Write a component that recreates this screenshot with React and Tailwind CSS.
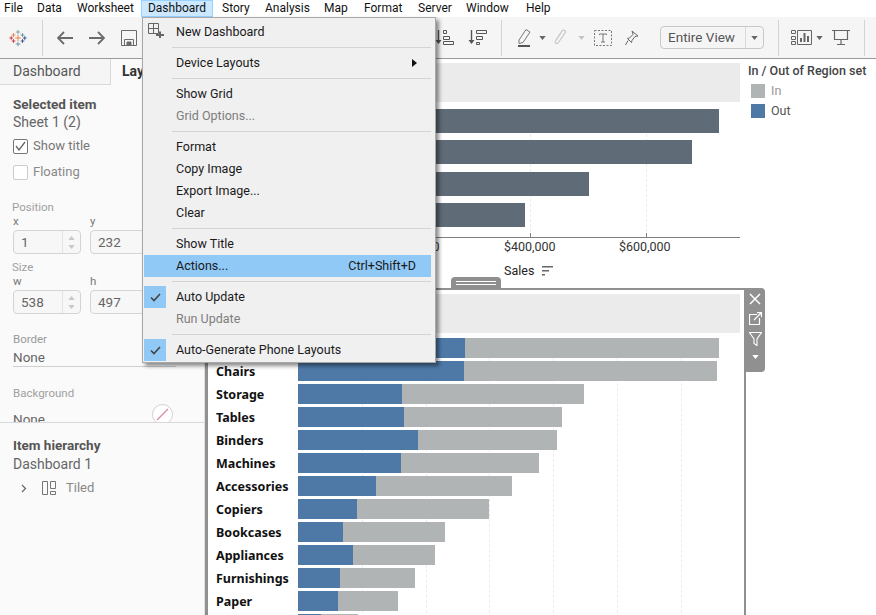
const menuBar = [
  { label: "File", w: "w-[28px]" },
  { label: "Data", w: "w-[40px]" },
  { label: "Worksheet", w: "w-[73px]" },
  { label: "Dashboard", w: "w-[72px]", active: true },
  { label: "Story", w: "w-[43px]" },
  { label: "Analysis", w: "w-[59px]" },
  { label: "Map", w: "w-[40px]" },
  { label: "Format", w: "w-[54px]" },
  { label: "Server", w: "w-[48px]" },
  { label: "Window", w: "w-[60px]" },
  { label: "Help", w: "w-[40px]" },
];

const menuItems = [
  { label: "New Dashboard", icon: true },
  { sep: true },
  { label: "Device Layouts", arrow: true },
  { sep: true },
  { label: "Show Grid" },
  { label: "Grid Options...", disabled: true },
  { sep: true },
  { label: "Format" },
  { label: "Copy Image" },
  { label: "Export Image..." },
  { label: "Clear" },
  { sep: true },
  { label: "Show Title" },
  { label: "Actions...", shortcut: "Ctrl+Shift+D", highlight: true },
  { sep: true },
  { label: "Auto Update", checked: true },
  { label: "Run Update", disabled: true },
  { sep: true },
  { label: "Auto-Generate Phone Layouts", checked: true },
];

const topBars = [
  { y: "mt-[7px]", end: 719 },
  { y: "mt-[7px]", end: 692 },
  { y: "mt-[8px]", end: 589 },
  { y: "mt-[7px]", end: 525 },
];

const rows = [
  { name: "", blue: 465, end: 719 },
  { name: "Chairs", blue: 464, end: 717 },
  { name: "Storage", blue: 402, end: 584 },
  { name: "Tables", blue: 404, end: 562 },
  { name: "Binders", blue: 418, end: 557 },
  { name: "Machines", blue: 401, end: 539 },
  { name: "Accessories", blue: 376, end: 512 },
  { name: "Copiers", blue: 357, end: 489 },
  { name: "Bookcases", blue: 343, end: 445 },
  { name: "Appliances", blue: 353, end: 435 },
  { name: "Furnishings", blue: 340, end: 415 },
  { name: "Paper", blue: 338, end: 398 },
  { name: "", blue: 321, end: 358 },
];

function TableauLogo() {
  const marks = [
    [12, 4, 3, "#7099a6"],
    [12, 20, 3, "#5b879b"],
    [6, 8, 2.5, "#e8762d"],
    [18, 8, 2.5, "#59879b"],
    [12, 12, 4, "#e8762d"],
    [3, 12, 2.5, "#c72035"],
    [21, 12, 2.5, "#1f457e"],
    [6, 16, 2.5, "#c72035"],
    [18, 16, 2.5, "#1f457e"],
  ];
  return (
    <svg width="18" height="18" viewBox="0 0 24 24" strokeWidth="1.1" fill="none">
      {marks.map(([x, y, r, c], i) => (
        <path key={i} stroke={c} d={`M${x - r} ${y}H${x + r}M${x} ${y - r}V${y + r}`} />
      ))}
    </svg>
  );
}

function Caret({ className = "" }) {
  return (
    <svg width="7" height="4" viewBox="0 0 8 5" className={className}>
      <path d="M0 0h8L4 5z" fill="currentColor" />
    </svg>
  );
}

function SortIcon({ flip }) {
  return (
    <svg width="20" height="17" viewBox="0 0 20 17" fill="none" stroke="#555" strokeWidth="1">
      <path d="M3.5 1v13" strokeWidth="1.4" />
      <path d="M0.5 11h6L3.5 15z" fill="#555" stroke="none" />
      {flip ? (
        <path d="M8.5 1.5h10v3h-10zM8.5 7.5h6v3h-6zM8.500 13.500h3v2h-3z" />
      ) : (
        <path d="M8.5 1.5h3v3h-3zM8.5 7.5h6v3h-6zM8.500 12.500h10v3h-10z" />
      )}
    </svg>
  );
}

function Toolbar() {
  return (
    <div className="h-[42px] flex items-center bg-[#f5f5f5] border-b border-[#9a9a9a] shrink-0">
      <div className="w-[43px] h-[36px] pr-[6px] flex justify-center items-center border-r border-[#d4d4d4]">
        <TableauLogo />
      </div>
      <div className="ml-[14px]">
        <svg width="16" height="14" viewBox="0 0 16 14" fill="none" stroke="#6b6b6b" strokeWidth="1.8">
          <path d="M16 7H1M7 1L1 7l6 6" />
        </svg>
      </div>
      <div className="ml-[16px]">
        <svg width="16" height="14" viewBox="0 0 16 14" fill="none" stroke="#6b6b6b" strokeWidth="1.8">
          <path d="M0 7h15M9 1l6 6-6 6" />
        </svg>
      </div>
      <div className="ml-[16px]">
        <svg width="16" height="16" viewBox="0 0 16 16" fill="none" stroke="#6b6b6b">
          <path d="M.5.5h15v15H.5z" />
          <path d="M3.5 15.5v-6h9v6" />
          <path d="M6 12h4v3.500H6z" fill="#6b6b6b" />
        </svg>
      </div>
      <div className="ml-[298px]">
        <SortIcon />
      </div>
      <div className="ml-[13px]">
        <SortIcon flip />
      </div>
      <div className="ml-[13px] h-[36px] border-l border-[#d4d4d4]" />
      <div className="ml-[16px]">
        <svg width="14" height="19" viewBox="0 0 14 19" fill="none" stroke="#777">
          <path d="M1 12L8 1.500l4 2.500-7 10.500-4 1z" />
          <path d="M0 18h12" stroke="#555" strokeWidth="2" />
        </svg>
      </div>
      <Caret className="ml-[7px] text-[#666]" />
      <div className="ml-[8px]">
        <svg width="12" height="17" viewBox="0 0 12 17" fill="none" stroke="#c9c9c9" strokeWidth="1.3">
          <path d="M2 11l6-9c2-2 4.500 0 3 2L4 14c-1 1.500-3.500 0-2.500-2l5.500-8" />
        </svg>
      </div>
      <Caret className="ml-[12px] text-[#c4c4c4]" />
      <div className="ml-[9px]">
        <svg width="18" height="16" viewBox="0 0 18 16" fill="none" stroke="#777">
          <path d="M.5.5h17v15H.500z" strokeDasharray="2 1.500" />
          <path d="M5.500 5V4h7v1M9 4v8M7 12h4" />
        </svg>
      </div>
      <div className="ml-[13px]">
        <svg width="14" height="16" viewBox="0 0 14 16" fill="none" stroke="#666">
          <path d="M7 1l6 5-3 .500-3 4-.500 2-4-4 2-.500 3.500-3.500zM3 10.500L.500 15" />
        </svg>
      </div>
      <div className="ml-[21px] w-[104px] h-[23px] border border-[#c8c8c8] rounded-sm flex items-center bg-[#f5f5f5]">
        <span className="w-[85px] pl-[7px] text-[13.500px] leading-none text-[#555] border-r border-[#d8d8d8] h-[21px] flex items-center">
          Entire View
        </span>
        <Caret className="ml-[5px] text-[#666]" />
      </div>
      <div className="ml-[14px] h-[36px] border-l border-[#d4d4d4]" />
      <div className="ml-[12px]">
        <svg width="21" height="17" viewBox="0 0 21 17" fill="none" stroke="#666">
          <path d="M.5 1.500h4v3h-4zM.5 7.500h4v3h-4zM.500 12.500h4v3h-4zM6.500 1.500h14v14h-14z" />
          <path d="M10 13V9M13.500 13V4M17 13V7" strokeWidth="2" />
        </svg>
      </div>
      <Caret className="ml-[4px] text-[#666]" />
      <div className="ml-[9px]">
        <svg width="18" height="17" viewBox="0 0 18 17" fill="none" stroke="#666">
          <path d="M0 1.500h18M2.500 1.500v9h13v-9M9 10.500v5M5 15.500h8" strokeWidth="1.200" />
        </svg>
      </div>
      <div className="ml-[14px] h-[36px] border-l border-[#d4d4d4]" />
    </div>
  );
}

function NumberBox({ value, spinner }) {
  return (
    <div className="w-[68px] h-[24px] border border-[#d4d4d4] rounded-sm bg-[#f7f7f7] flex items-center text-[13.500px] text-[#666] shrink-0">
      <span className="flex-1 pl-[7px]">{value}</span>
      {spinner && (
        <div className="w-[18px] h-full border-l border-[#e4e4e4] flex flex-col items-center justify-center gap-[5px] text-[#c8c8c8]">
          <Caret className="rotate-180" />
          <Caret />
        </div>
      )}
    </div>
  );
}

function Sidebar() {
  return (
    <div className="w-[205px] shrink-0 bg-[#fafafa] border-r border-[#e2e2e2] flex flex-col text-[#555]">
      <div className="h-[26px] flex shrink-0">
        <div className="w-[111px] bg-[#f5f5f5] border-r border-b border-[#d8d8d8] pl-[13px] text-[14px] leading-[25px] text-[#555]">
          Dashboard
        </div>
        <div className="pl-[11px] text-[14px] leading-[25px] font-bold text-[#333]">Layout</div>
        <div className="flex-1 border-b border-[#d8d8d8]" />
      </div>
      <div className="h-[337px] overflow-hidden px-[13px] shrink-0">
        <div className="mt-[10px] text-[13.500px] font-bold leading-[19px] text-[#555]">Selected item</div>
        <div className="-mt-px text-[14px] leading-[18px] text-[#666]">Sheet 1 (2)</div>
        <div className="mt-[7px] flex items-center gap-[5px] h-[16px]">
          <div className="w-[15px] h-[15px] border border-[#777] rounded-[2px] bg-white flex items-center justify-center">
            <svg width="11" height="10" viewBox="0 0 11 10" fill="none" stroke="#666" strokeWidth="1.300">
              <path d="M1 5l3 4 6-8" />
            </svg>
          </div>
          <span className="text-[13px] text-[#777]">Show title</span>
        </div>
        <div className="mt-[10px] flex items-center gap-[5px] h-[16px]">
          <div className="w-[15px] h-[15px] border border-[#ccc] rounded-[2px] bg-white" />
          <span className="text-[13px] text-[#888]">Floating</span>
        </div>
        <div className="mt-[20px] -ml-px text-[11.500px] leading-[14px] text-[#a0a0a0]">Position</div>
        <div className="flex text-[11.500px] leading-[14px] text-[#777]">
          <span className="w-[77px]">x</span>
          <span>y</span>
        </div>
        <div className="mt-[2px] flex gap-[9px]">
          <NumberBox value="1" spinner />
          <NumberBox value="232" />
        </div>
        <div className="mt-[6px] -ml-px text-[11.500px] leading-[14px] text-[#a0a0a0]">Size</div>
        <div className="flex text-[11.500px] leading-[14px] text-[#777]">
          <span className="w-[77px]">w</span>
          <span>h</span>
        </div>
        <div className="mt-[2px] flex gap-[9px]">
          <NumberBox value="538" spinner />
          <NumberBox value="497" />
        </div>
        <div className="mt-[18px] text-[11.500px] leading-[14px] text-[#999]">Border</div>
        <div className="mt-[3px] h-[18px] w-[163px] border-b border-[#cfcfcf] text-[13.500px] leading-[17px] text-[#666]">
          None
        </div>
        <div className="mt-[19px] text-[11.500px] leading-[14px] text-[#a0a0a0]">Background</div>
        <div className="mt-[5px] flex w-[160px] justify-between items-start">
          <span className="mt-[6px] text-[13.500px] leading-[17px] text-[#666]">None</span>
          <svg width="21" height="21" viewBox="0 0 21 21" fill="#fff" stroke="#d0d0d0" className="mt-[-1px]">
            <circle cx="10.500" cy="10.500" r="10" />
            <path d="M5 16L16 5" stroke="#d98a9a" strokeWidth="1.300" />
          </svg>
        </div>
      </div>
      <div className="flex-1 border-t border-[#d8d8d8] px-[13px] pt-[13px]">
        <div className="text-[13.500px] font-bold leading-[19px] text-[#555]">Item hierarchy</div>
        <div className="text-[14px] leading-[19px] text-[#666]">Dashboard 1</div>
        <div className="mt-[4px] flex items-center h-[20px]">
          <svg width="6" height="9" viewBox="0 0 6 9" fill="none" stroke="#666" strokeWidth="1.200" className="ml-[8px]">
            <path d="M1 1l3.500 3.500L1 8" />
          </svg>
          <svg width="14" height="14" viewBox="0 0 14 14" fill="none" stroke="#777" className="ml-[15px]">
            <path d="M.5.500h5v13h-5zM8.500.500h5v7h-5zM8.500 10.500h5v3h-5z" />
          </svg>
          <span className="ml-[10px] text-[13px] text-[#888]">Tiled</span>
        </div>
      </div>
    </div>
  );
}

function DashboardMenu() {
  return (
    <div className="absolute left-[142px] top-[17px] w-[294px] h-[346px] pt-[3px] pl-[1px] pr-[4px] bg-[#f0f0f0] border border-[#a8a8a8] shadow-[3px_3px_4px_rgba(0,0,0,0.45)] text-[12.500px] text-[#1a1a1a]">
      {menuItems.map((item, i) => {
        if (item.sep) {
          return (
            <div key={i} className="h-[9px] flex items-center pl-[28px]">
              <div className="w-full h-px bg-[#d4d4d4]" />
            </div>
          );
        }
        return (
          <div
            key={i}
            className={
              "relative h-[22px] flex items-center pl-[32px] pr-[15px] " +
              (item.highlight ? "bg-[#90c8f6]" : "")
            }
          >
            {item.icon && (
              <svg width="16" height="15" viewBox="0 0 16 15" fill="none" stroke="#666" className="absolute left-[4px] top-[2px]">
                <path d="M.5.500h10v10H.500zM.500 5.500h10M5.500.500v10" />
                <path d="M8 12h8M12 8.500v6.500" strokeWidth="2" stroke="#666" />
              </svg>
            )}
            {item.checked && (
              <div className="absolute left-0 top-0 w-[22px] h-[22px] bg-[#90c8f6] flex items-center justify-center">
                <svg width="11" height="9" viewBox="0 0 11 9" fill="none" stroke="#444" strokeWidth="1.600">
                  <path d="M1 4.500l3 3 6-6.500" />
                </svg>
              </div>
            )}
            <span className={item.disabled ? "text-[#7d7d7d]" : ""}>{item.label}</span>
            {item.shortcut && <span className="ml-auto">{item.shortcut}</span>}
            {item.arrow && (
              <svg width="5" height="8" viewBox="0 0 5 8" className="ml-auto mr-[-1px]">
                <path d="M0 0l5 4-5 4z" fill="#111" />
              </svg>
            )}
          </div>
        );
      })}
    </div>
  );
}

function Grid({ lines }) {
  return (
    <>
      {lines.map((x) => (
        <div
          key={x}
          className="absolute top-0 bottom-0 border-l border-dashed border-[#ececec]"
          style={{ left: x }}
        />
      ))}
    </>
  );
}

function TopChart() {
  return (
    <div className="h-[229px] shrink-0 flex relative">
      <div className="w-[535px] shrink-0">
        <div className="mt-[4px] h-[39px] bg-[#ebebeb]" />
        <div className="relative h-[129px] border-b border-[#7f7f7f]">
          <Grid lines={[210, 325, 441]} />
          {topBars.map((b) => (
            <div
              key={b.end}
              className={"relative h-[24px] bg-[#5f6b76] " + b.y}
              style={{ width: b.end - 205 }}
            />
          ))}
          <div className="absolute left-[325px] top-[124px] w-px h-[4px] bg-[#7f7f7f]" />
          <div className="absolute left-[441px] top-[124px] w-px h-[4px] bg-[#7f7f7f]" />
        </div>
        <div className="relative h-[20px] text-[12.500px] leading-[16px] text-[#333]">
          <span className="absolute left-[183px] top-[1px]">$200,000</span>
          <span className="absolute left-[299px] top-[1px]">$400,000</span>
          <span className="absolute left-[414px] top-[1px]">$600,000</span>
        </div>
        <div className="mt-[5px] pl-[299px] flex items-center gap-[8px] text-[12.500px] leading-[16px] text-[#222]">
          Sales
          <svg width="11" height="10" viewBox="0 0 11 10" fill="#666">
            <path d="M0 0h11v1.500H0zM0 4h7v1.500H0zM0 8h3v1.500H0z" />
          </svg>
        </div>
      </div>
      <div className="ml-[8px] pt-[5px] text-[12.500px]">
        <div className="font-medium text-[#444] leading-[14px] whitespace-nowrap">In / Out of Region set</div>
        <div className="mt-[6px] ml-[3px] flex items-center gap-[6px] h-[14px] text-[#999]">
          <div className="w-[14px] h-[14px] bg-[#b1b4b4]" />
          In
        </div>
        <div className="mt-[6px] ml-[3px] flex items-center gap-[6px] h-[14px] text-[#555]">
          <div className="w-[14px] h-[14px] bg-[#4e79a7]" />
          Out
        </div>
      </div>
    </div>
  );
}

function BottomChart() {
  return (
    <div className="relative flex-1 w-[541px] border-l-[3px] border-t-2 border-r-2 border-[#909090] bg-white">
      {/* handle over the top edge */}
      <div className="absolute left-[243px] top-[-13px] w-[50px] h-[11px] bg-[#8f8f8f] rounded-t-sm flex flex-col justify-center gap-[2px] px-[5px]">
        <div className="h-px bg-white" />
        <div className="h-px bg-white" />
      </div>
      <div className="mt-[4px] ml-[2px] w-[530px] h-[39px] bg-[#ebebeb]" />
      <div className="relative mt-[5px] h-[300px] overflow-hidden">
        <Grid lines={[154, 218, 281, 345, 409, 473]} />
        {rows.map((r, i) => (
          <div key={i} className="relative flex items-center h-[20px] mb-[3px]">
            <span className="w-[90px] shrink-0 pl-[8px] pt-[3px] font-['Noto_Sans',sans-serif] text-[12.500px] font-bold text-[#111]">{r.name}</span>
            <div className="h-full bg-[#4e79a7]" style={{ width: r.blue - 298 }} />
            <div className="h-full bg-[#b1b4b4]" style={{ width: r.end - r.blue }} />
          </div>
        ))}
      </div>
      {/* floating object controls */}
      <div className="absolute left-[537px] top-[-2px] w-[20px] h-[84px] bg-[#909090] rounded-r-sm flex flex-col items-center pt-[5px] gap-[7px]">
        <svg width="12" height="12" viewBox="0 0 12 12" fill="none" stroke="#fff" strokeWidth="1.500">
          <path d="M1 1l10 10M11 1L1 11" />
        </svg>
        <svg width="13" height="13" viewBox="0 0 13 13" fill="none" stroke="#fff" strokeWidth="1.200">
          <path d="M8 2.500H.500v10h10V6M5 8l7-7M8 .600h4.500V5" />
        </svg>
        <svg width="13" height="14" viewBox="0 0 13 14" fill="none" stroke="#fff" strokeWidth="1.100">
          <path d="M.5.500h12L8 7v6.500L5 11.500V7z" />
        </svg>
        <Caret className="text-white mt-[2px]" />
      </div>
    </div>
  );
}

export default function App() {
  return (
    <div className="relative w-[876px] h-[615px] overflow-hidden bg-white flex flex-col font-['Roboto',sans-serif]">
      <div className="h-[17px] flex shrink-0 text-[12px] leading-[16px] text-[#111] bg-white">
        {menuBar.map((m) => (
          <div
            key={m.label}
            className={
              m.w +
              " shrink-0 " +
              (m.active
                ? "bg-[#cce8ff] border border-[#99d1ff] text-center leading-[14px]"
                : m.label === "File"
                  ? "pl-[4px]"
                  : "pl-[9px]")
            }
          >
            {m.label}
          </div>
        ))}
      </div>
      <Toolbar />
      <div className="flex flex-1 min-h-0">
        <Sidebar />
        <div className="flex-1 flex flex-col min-w-0">
          <TopChart />
          <BottomChart />
        </div>
      </div>
      <DashboardMenu />
    </div>
  );
}
